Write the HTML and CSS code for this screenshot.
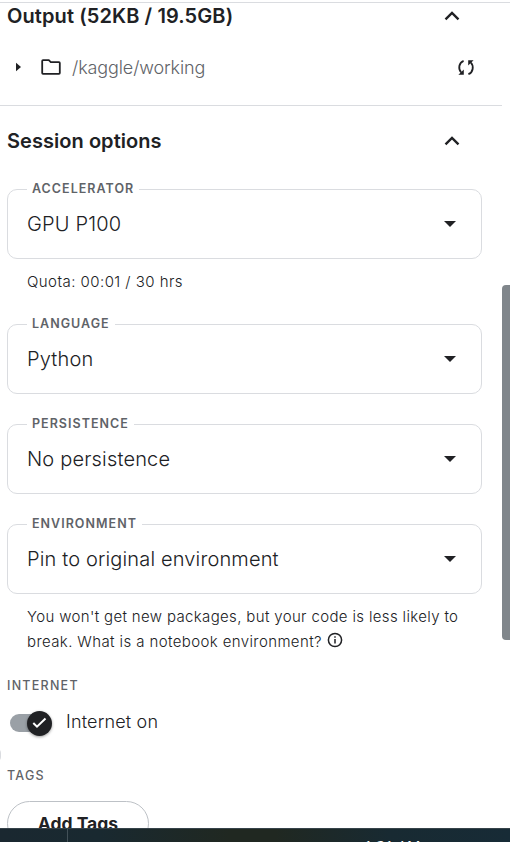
FILE: index.html
```html
<!DOCTYPE html>
<html lang="en">
<head>
<meta charset="utf-8">
<title>Session options</title>
<link rel="stylesheet" href="styles.css">
</head>
<body>
<main class="panel">
  <section class="output">
    <div class="heading"><h2 class="title title-output">Output (52KB / 19.5GB)</h2>
      <svg class="chevron" width="16" height="10" viewBox="0 0 16 10"><path d="M1.5 8.3 8 1.9l6.5 6.4"/></svg>
    </div>
    <div class="path-row">
      <svg class="expand" width="5" height="10" viewBox="0 0 5 10"><path d="M0 .7 5 5 0 9.3z"/></svg>
      <svg class="folder" width="20" height="16" viewBox="0 0 20 16"><path d="M2 1.2h5.8l2 2H18q.8 0 .8.8v10q0 .8-.8.8H2q-.8 0-.8-.8V2q0-.8.8-.8z"/></svg>
      <span class="path">/kaggle/working</span>
      <svg class="sync" width="18" height="17" viewBox="0 0 18 17"><path d="M6.6 1.800C1.700 3.600 1 10 4.200 13.500M11.400 15.200c4.900-1.800 5.600-8.200 2.400-11.700"/><path class="tip" d="M1.400 15.800h5.400v-5.400zM16.600 1.200h-5.400v5.400z"/></svg>
    </div>
  </section>
  <section class="session">
    <div class="heading heading-session"><h2 class="title title-session">Session options</h2>
      <svg class="chevron" width="16" height="10" viewBox="0 0 16 10"><path d="M1.5 8.3 8 1.9l6.5 6.4"/></svg>
    </div>
    <div class="field"><span class="legend">ACCELERATOR</span><span class="value">GPU P100</span><i class="caret"></i></div>
    <p class="hint hint-quota">Quota: 00:01 / 30 hrs</p>
    <div class="field"><span class="legend">LANGUAGE</span><span class="value">Python</span><i class="caret"></i></div>
    <div class="field spaced"><span class="legend">PERSISTENCE</span><span class="value">No persistence</span><i class="caret"></i></div>
    <div class="field spaced"><span class="legend">ENVIRONMENT</span><span class="value value-env">Pin to original environment</span><i class="caret"></i></div>
    <p class="hint hint-env">You won't get new packages, but your code is less likely to<br><span class="question">break. What is a notebook environment?</span><svg class="info" width="16" height="16" viewBox="0 0 16 16"><circle cx="8" cy="8" r="6.6"/><path d="M8 7v4.600M8 4.200v1.600"/></svg></p>
    <h3 class="label">INTERNET</h3>
    <div class="switch-row">
      <span class="switch"><span class="thumb"><svg width="15" height="12" viewBox="0 0 15 12"><path d="M1.300 6 5 9.700 13.500 1.500"/></svg></span></span>
      <span class="switch-text">Internet on</span>
    </div>
    <h3 class="label">TAGS</h3>
    <button class="add-tags">Add Tags</button>
  </section>
  <div class="scrollbar"></div>
  <div class="edge"></div>
</main>
<footer class="taskbar"><span class="divider"></span><span class="clock">1:21 AM</span></footer>
</body>
</html>
```

FILE: styles.css
```css
* { box-sizing: border-box; }
body {
  margin: 0;
  width: 510px;
  height: 842px;
  overflow: hidden;
  background: #fff;
  color: #202124;
  font-family: Inter, sans-serif;
}
h2, h3, p { margin: 0; }
svg { display: block; flex: none; fill: none; stroke: #202124; }
.panel { position: relative; height: 828px; padding-top: 2px; overflow: hidden; }
.output { height: 103px; border-top: 1px solid #dadce0; }
.heading {
  display: flex;
  align-items: center;
  justify-content: space-between;
  height: 26px;
  padding: 0 50px 0 7px;
}
.title { font-size: 20px; font-weight: 600; line-height: 26px; white-space: nowrap; }
.title-output { letter-spacing: .1px; }
.title-session { letter-spacing: .05px; }
.chevron { stroke-width: 2.4; }
.path-row { display: flex; align-items: center; height: 30px; margin-top: 23px; padding: 0 35px 0 16px; }
.expand { fill: #202124; stroke: none; }
.folder { margin-left: 20px; stroke-width: 1.8; }
.path { flex: 1; margin: 2px 0 0 11px; color: #5f6368; font-size: 18px; font-weight: 300; line-height: 30px; letter-spacing: -.12px; }
.sync { stroke-width: 1.8; }
.tip { fill: #202124; stroke: none; }
.session::before { content: ""; display: block; width: 502px; height: 1px; background: #dadce0; }
.heading-session { margin: 22px 0 35px; }
.field {
  position: relative;
  display: flex;
  align-items: center;
  justify-content: space-between;
  width: 475px;
  height: 70px;
  margin-left: 7px;
  padding: 0 25px 0 19px;
  border: 1px solid #dadce0;
  border-radius: 10px;
}
.spaced { margin-top: 30px; }
.legend {
  position: absolute;
  top: -9px;
  left: 19px;
  padding: 0 5px;
  background: #fff;
  color: #5f6368;
  font-size: 12.5px;
  font-weight: 600;
  line-height: 16px;
  letter-spacing: 1.02px;
}
.value { font-size: 20px; font-weight: 300; line-height: 30px; letter-spacing: .18px; }
.value-env { letter-spacing: .15px; }
.caret { border: 6px solid transparent; border-top: 6.5px solid #202124; border-bottom: 0; }
.hint { margin-left: 27px; font-size: 15px; font-weight: 300; line-height: 25px; letter-spacing: .35px; white-space: nowrap; }
.hint-quota { padding-top: 10px; height: 65px; letter-spacing: .45px; }
.hint-env { padding-top: 10px; height: 84px; }
.question { letter-spacing: .39px; }
.info { display: inline-block; margin-left: 5px; vertical-align: -1px; stroke-width: 1.5; }
.label {
  padding-left: 7px;
  color: #5f6368;
  font-size: 12.5px;
  font-weight: 500;
  line-height: 16px;
  letter-spacing: 1.25px;
}
.switch-row { display: flex; align-items: center; height: 30px; margin: 13px 0 31px 10px; }
.switch { display: flex; align-items: center; justify-content: flex-end; width: 42px; height: 18px; margin-top: 2px; border-radius: 9px; background: linear-gradient(90deg, #9aa0a6 32px, transparent 32px); }
.thumb { display: flex; align-items: center; justify-content: center; flex: none; width: 25px; height: 25px; border-radius: 50%; background: #202124; box-shadow: 0 1px 3px rgba(0,0,0,.4); }
.thumb svg { stroke: #fff; stroke-width: 2; }
.switch-text { margin-left: 14px; font-size: 18px; font-weight: 300; line-height: 30px; letter-spacing: .17px; }
.add-tags {
  display: block;
  width: 142px;
  height: 45px;
  margin: 17px 0 0 7px;
  padding: 0;
  border: 1px solid #bdc1c6;
  border-radius: 23px;
  background: #fff;
  color: #202124;
  font: 700 17.5px/43px Inter, sans-serif;
}
.scrollbar { position: absolute; top: 285px; left: 502px; width: 12px; height: 355px; border-radius: 4px; background: #80868b; }
.edge { position: absolute; top: 748px; left: -9px; width: 10px; height: 14px; border-radius: 5px; background: #dadce0; }
.taskbar {
  display: flex;
  height: 14px;
  overflow: hidden;
  border-top: 1px solid #36434a;
  background: linear-gradient(90deg, #1a2830, #192930 100px, #202821 230px, #202821 275px, #182a32 390px, #172b36);
}
.divider { width: 1px; height: 14px; margin-left: 67px; background: #435158; }
.clock { margin: 6px 0 0 296px; color: #fff; font: 15px/20px "Open Sans", sans-serif; white-space: nowrap; }
```
